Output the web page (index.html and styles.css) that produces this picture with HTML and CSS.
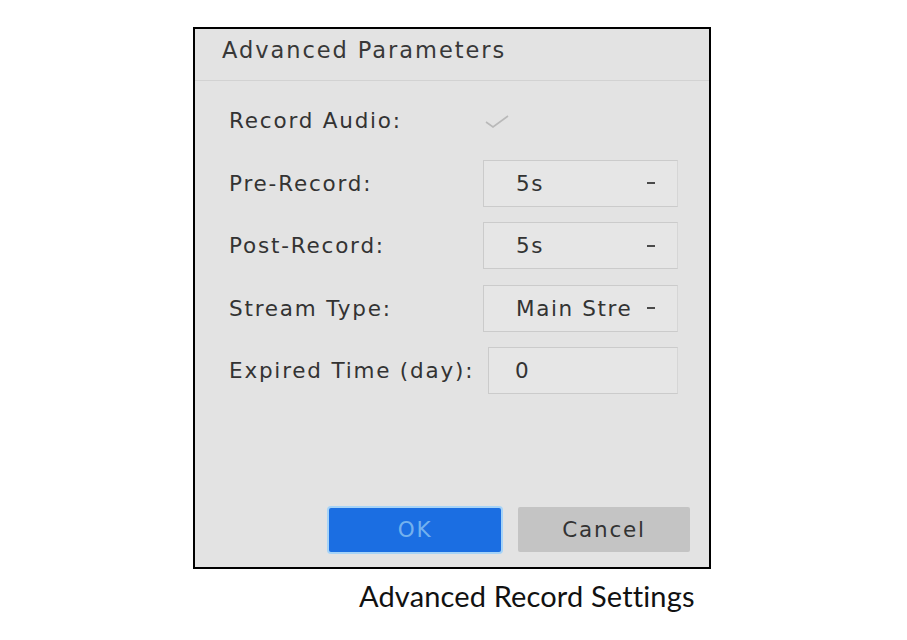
FILE: index.html
```html
<!DOCTYPE html>
<html lang="en">
<head>
  <meta charset="UTF-8" />
  <meta name="viewport" content="width=device-width, initial-scale=1.0" />
  <title>Advanced Record Settings</title>
  <link rel="stylesheet" href="styles.css">
</head>
<body>
  <div class="frame">
    <div class="dialog">
      <div class="dialog-title">Advanced Parameters</div>

      <div class="fields">
        <div class="field">
          <label>Record Audio:</label>
          <span class="check">
            <svg width="26" height="16" viewBox="0 0 26 16">
              <path d="M2 9 L9 14 L24 3" fill="none" stroke="#b9b9b9" stroke-width="1.6" />
            </svg>
          </span>
        </div>
        <div class="field">
          <label>Pre-Record:</label>
          <div class="select"><span class="value">5s</span><span class="caret"></span></div>
        </div>
        <div class="field">
          <label>Post-Record:</label>
          <div class="select"><span class="value">5s</span><span class="caret"></span></div>
        </div>
        <div class="field">
          <label>Stream Type:</label>
          <div class="select"><span class="value">Main Stream</span><span class="caret"></span></div>
        </div>
        <div class="field">
          <label>Expired Time (day):</label>
          <div class="input input-narrow"><span class="value">0</span></div>
        </div>
      </div>

      <div class="actions">
        <button class="btn btn-ok">OK</button>
        <button class="btn btn-cancel">Cancel</button>
      </div>
    </div>
  </div>

  <p class="caption">Advanced Record Settings</p>
</body>
</html>
```

FILE: styles.css
```css
body {
  margin: 0;
  background: #fff;
  font-family: "DejaVu Sans", Verdana, sans-serif;
}

.frame {
  box-sizing: border-box;
  width: 518px;
  height: 542px;
  margin: 27px 0 0 193px;
  border: 2px solid #000;
}

.dialog {
  display: flex;
  flex-direction: column;
  height: 100%;
  background: #e3e3e3;
  color: #333;
}

.dialog-title {
  height: 42px;
  line-height: 42px;
  padding: 0 0 9px 27px;
  border-bottom: 1px solid #d2d2d2;
  font-size: 22.5px;
  letter-spacing: 1.95px;
  color: #383838;
}

.fields {
  display: flex;
  flex-direction: column;
  gap: 15.5px;
  padding: 16px 0 0 34px;
}

.field {
  display: flex;
  align-items: center;
  height: 47px;
}

.field label {
  width: 254px;
  flex-shrink: 0;
  font-size: 21.5px;
  letter-spacing: 1.8px;
  white-space: nowrap;
}

.check {
  display: flex;
  padding-left: 1px;
}

.select,
.input {
  box-sizing: border-box;
  display: flex;
  align-items: center;
  width: 195px;
  height: 47px;
  padding: 0 22px 0 32px;
  border: 1px solid #cbcbcb;
  border-right-color: #d6d6d6;
  background: #e6e6e6;
}

.input-narrow {
  width: 190px;
  margin-left: 5px;
  padding-left: 26px;
}

.value {
  flex: 1;
  overflow: hidden;
  white-space: nowrap;
  font-size: 21.5px;
  letter-spacing: 1.6px;
}

.caret {
  width: 8px;
  height: 2px;
  margin-left: 16px;
  background: #4a4a4a;
}

.actions {
  display: flex;
  justify-content: flex-end;
  align-items: center;
  gap: 17px;
  margin-top: auto;
  padding: 0 19px 15px 0;
}

.btn {
  font-family: "DejaVu Sans", Verdana, sans-serif;
  font-size: 21.5px;
  letter-spacing: 1.8px;
  border: none;
  border-radius: 2px;
  cursor: pointer;
}

.btn-ok {
  width: 172px;
  height: 44px;
  background: #1b6ee2;
  color: #74b1ee;
  box-shadow: 0 0 0 2px #a6d3f7;
}

.btn-cancel {
  width: 172px;
  height: 45px;
  background: #c4c4c4;
  color: #333;
}

.caption {
  margin: 10px 0 0 359px;
  font-family: Lato, "Open Sans", sans-serif;
  font-size: 29px;
  letter-spacing: 0.15px;
  line-height: 34px;
  color: #111;
}
```
